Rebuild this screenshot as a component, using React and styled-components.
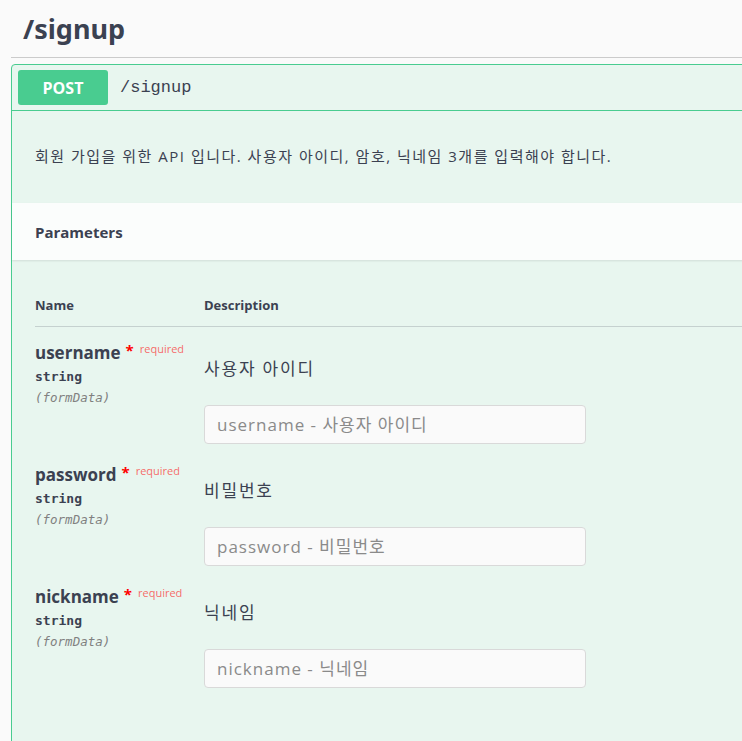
import styled, { createGlobalStyle } from "styled-components";

const GlobalStyle = createGlobalStyle`
    body {
        margin: 0;
        background: #fafafa;
        overflow: hidden;
        font-family: "Open Sans", "Noto Sans CJK KR", sans-serif;
        color: #3b4151;
    }
`

const Section = styled.div`
    padding-left: 11px;
    margin-right: -30px;
`

const TagTitle = styled.h3`
    margin: 0;
    height: 57px;
    display: flex;
    align-items: center;
    padding-left: 12px;
    border-bottom: 1px solid #cbcbcb;
    font-family: "Noto Sans", "Noto Sans CJK KR", sans-serif;
    font-size: 27px;
    font-weight: 700;
    color: #3b4151;
`

const OpBlock = styled.div`
    margin-top: 6px;
    border: 1px solid #49cc90;
    border-radius: 4px;
    background: rgb(232, 246, 239);
    min-height: 700px;
`

const Summary = styled.div`
    display: flex;
    align-items: center;
    padding: 5px 6px;
    border-bottom: 1px solid #49cc90;
`

const Method = styled.span`
    width: 90px;
    height: 35px;
    display: flex;
    align-items: center;
    justify-content: center;
    background: #49cc90;
    border-radius: 3px;
    color: #fff;
    font-size: 16px;
    font-weight: 700;
`

const Path = styled.span`
    margin-left: 12px;
    font-family: "Liberation Mono", monospace;
    font-size: 17px;
    color: #3b4151;
`

const Description = styled.div`
    padding: 0 23px 4px;
    height: 88px;
    display: flex;
    align-items: center;
    font-size: 15px;
    letter-spacing: 1.5px;
`

const SectionHeader = styled.div`
    height: 57px;
    display: flex;
    align-items: center;
    padding: 0 23px;
    background: rgba(255, 255, 255, 0.8);
    box-shadow: 0 1px 2px rgba(0, 0, 0, 0.1);
    font-size: 15px;
    font-weight: 700;
`

const Table = styled.div`
    padding: 36px 0 0 23px;
`

const HeaderRow = styled.div`
    display: grid;
    grid-template-columns: 169px 1fr;
    padding-bottom: 12px;
    border-bottom: 1px solid rgba(59, 65, 81, 0.2);
    font-size: 13px;
    font-weight: 700;
`

const Row = styled.div`
    display: grid;
    grid-template-columns: 169px 1fr;
    padding: 13px 0 5px;
`

const NameCell = styled.div`
    display: flex;
    flex-direction: column;
`

const ParamName = styled.div`
    display: flex;
    align-items: flex-start;
    height: 26px;
    font-size: 17px;
    font-weight: 700;
    line-height: 26px;
`

const Star = styled.span`
    color: red;
    font-size: 15px;
    margin-left: 5px;
    line-height: 20px;
`

const Required = styled.span`
    color: rgba(255, 0, 0, 0.6);
    font-size: 11px;
    font-weight: 400;
    margin-left: 6px;
    line-height: 18px;
`

const Type = styled.div`
    font-family: "DejaVu Sans Mono", monospace;
    font-size: 13px;
    font-weight: 600;
    line-height: 22px;
`

const In = styled.div`
    font-family: "DejaVu Sans Mono", monospace;
    font-size: 12.5px;
    font-style: italic;
    color: #808080;
    line-height: 20px;
`

const DescCell = styled.div`
    display: flex;
    flex-direction: column;
`

const ParamDesc = styled.div`
    margin-top: 17px;
    font-size: 17px;
    font-weight: 400;
    letter-spacing: 1.8px;
    line-height: 24px;
`

const Input = styled.input`
    margin-top: 24px;
    width: 382px;
    height: 39px;
    box-sizing: border-box;
    padding: 0 12px;
    border: 1px solid #d9d9d9;
    border-radius: 4px;
    background: #fafafa;
    font-family: "Open Sans", "Noto Sans CJK KR", sans-serif;
    font-size: 17px;
    letter-spacing: 1px;
    color: #3b4151;
    outline: none;

    &::placeholder {
        color: #8a8a8a;
    }
`

const params = [
    { name: "username", desc: "사용자 아이디" },
    { name: "password", desc: "비밀번호" },
    { name: "nickname", desc: "닉네임" },
]

function App() {
    return (
        <>
            <GlobalStyle />
            <Section>
                <TagTitle>/signup</TagTitle>
                <OpBlock>
                    <Summary>
                        <Method>POST</Method>
                        <Path>/signup</Path>
                    </Summary>
                    <Description>회원 가입을 위한 API 입니다. 사용자 아이디, 암호, 닉네임 3개를 입력해야 합니다.</Description>
                    <SectionHeader>Parameters</SectionHeader>
                    <Table>
                        <HeaderRow>
                            <div>Name</div>
                            <div>Description</div>
                        </HeaderRow>
                        {params.map((p) => (
                            <Row key={p.name}>
                                <NameCell>
                                    <ParamName>
                                        {p.name}
                                        <Star>*</Star>
                                        <Required>required</Required>
                                    </ParamName>
                                    <Type>string</Type>
                                    <In>(formData)</In>
                                </NameCell>
                                <DescCell>
                                    <ParamDesc>{p.desc}</ParamDesc>
                                    <Input placeholder={`${p.name} - ${p.desc}`} />
                                </DescCell>
                            </Row>
                        ))}
                    </Table>
                </OpBlock>
            </Section>
        </>
    )
}

export default App;
